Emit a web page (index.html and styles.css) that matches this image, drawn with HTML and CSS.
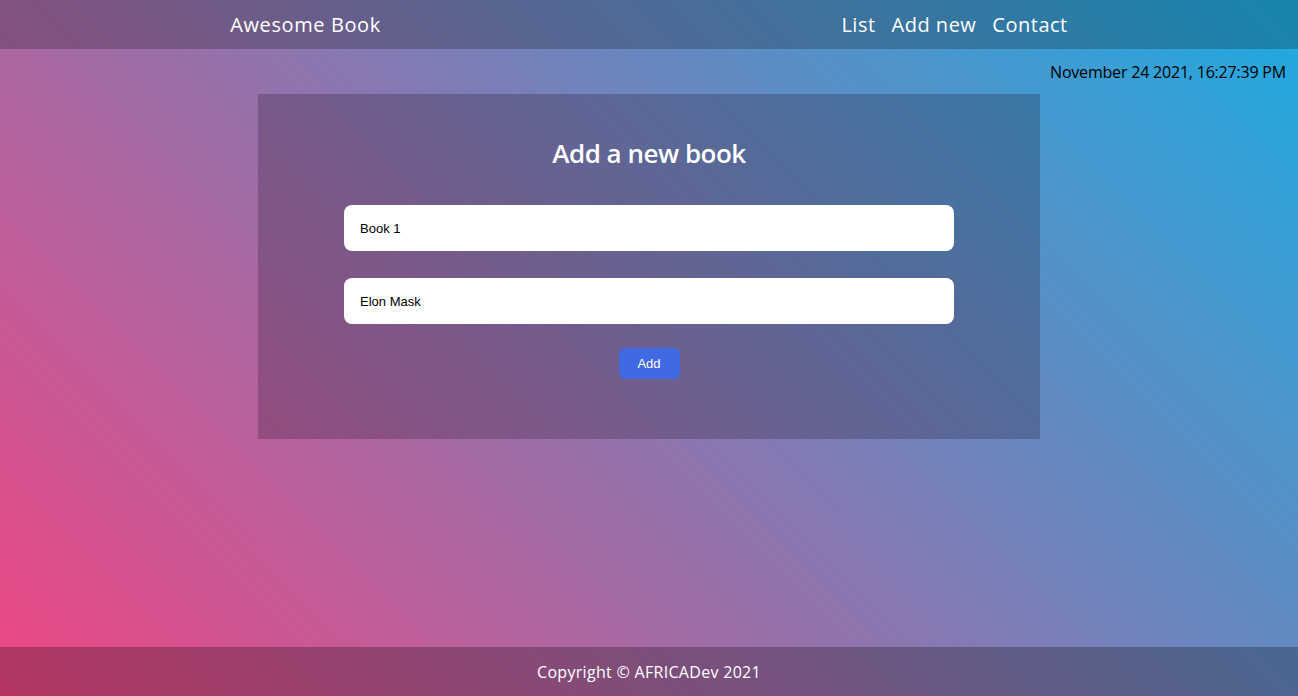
FILE: index.html
```html
<!DOCTYPE html>
<html lang="en">
<head>
<meta charset="utf-8">
<title>Awesome Book</title>
<link rel="stylesheet" href="styles.css">
</head>
<body>
<header class="topbar">
  <a class="brand" href="#">Awesome Book</a>
  <nav class="nav">
    <a href="#">List</a>
    <a href="#">Add new</a>
    <a href="#">Contact</a>
  </nav>
</header>
<main class="main">
  <p class="date">November 24 2021, 16:27:39 PM</p>
  <section class="card">
    <h2 class="card-title">Add a new book</h2>
    <form class="form">
      <input class="field" type="text" value="Book 1">
      <input class="field" type="text" value="Elon Mask">
      <button class="btn" type="button">Add</button>
    </form>
  </section>
</main>
<footer class="footer">Copyright © AFRICADev 2021</footer>
</body>
</html>
```
FILE: styles.css
```css
* { box-sizing: border-box; }
html, body { height: 100%; }
body {
  margin: 0;
  min-height: 100vh;
  display: flex;
  flex-direction: column;
  font-family: "Open Sans", "Lato", sans-serif;
  background: linear-gradient(45deg, #ef4683, #1eabe0);
  color: #fff;
}
.topbar {
  height: 49px;
  display: flex;
  align-items: center;
  justify-content: space-around;
  background: rgba(0, 0, 0, 0.22);
}
.brand {
  color: #fff;
  text-decoration: none;
  font-size: 20px;
  letter-spacing: 0.6px;
}
.nav { display: flex; gap: 16px; }
.nav a {
  color: #fff;
  text-decoration: none;
  font-size: 20px;
  letter-spacing: 0.5px;
}
.main {
  flex: 1;
  display: flex;
  flex-direction: column;
  align-items: center;
}
.date {
  align-self: flex-end;
  margin: 12px 12px 0 0;
  height: 22px;
  line-height: 22px;
  font-size: 16px;
  letter-spacing: -0.2px;
  color: #000;
}
.card {
  margin-top: 11px;
  width: 782px;
  height: 345px;
  background: rgba(30, 20, 40, 0.25);
  padding: 40px 86px 0;
  display: flex;
  flex-direction: column;
  align-items: center;
}
.card-title {
  margin: 0;
  height: 38px;
  line-height: 38px;
  font-size: 26px;
  font-weight: 600;
  letter-spacing: -0.5px;
}
.form {
  margin-top: 33px;
  width: 100%;
  display: flex;
  flex-direction: column;
  align-items: center;
  gap: 27px;
}
.field {
  width: 100%;
  height: 46px;
  border: none;
  border-radius: 8px;
  background: #fff;
  padding: 0 16px;
  font-family: "Liberation Sans", Arial, sans-serif;
  font-size: 13px;
  color: #000;
  outline: none;
}
.btn {
  margin-top: -3px;
  width: 61px;
  height: 31px;
  border: none;
  border-radius: 6px;
  background: #4169e1;
  color: #fff;
  font-family: "Liberation Sans", Arial, sans-serif;
  font-size: 13px;
}
.footer {
  height: 49px;
  display: flex;
  align-items: center;
  justify-content: center;
  background: rgba(0, 0, 0, 0.25);
  font-size: 16px;
  letter-spacing: 0.3px;
}
```
